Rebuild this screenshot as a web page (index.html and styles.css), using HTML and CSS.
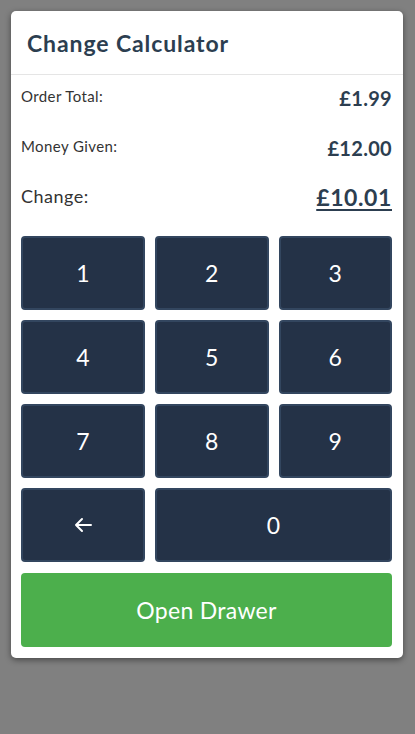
FILE: index.html
```html
<!DOCTYPE html>
<html>
<head>
<meta charset="utf-8">
<link rel="stylesheet" href="styles.css">
</head>
<body>
<div class="card">
  <div class="header"><h1 class="title">Change Calculator</h1></div>
  <div class="body">
    <div class="row">
      <span class="label">Order Total:</span>
      <span class="value">£1.99</span>
    </div>
    <div class="row">
      <span class="label">Money Given:</span>
      <span class="value">£12.00</span>
    </div>
    <div class="row change">
      <span class="label">Change:</span>
      <span class="value">£10.01</span>
    </div>
    <div class="keypad">
      <button class="key">1</button>
      <button class="key">2</button>
      <button class="key">3</button>
      <button class="key">4</button>
      <button class="key">5</button>
      <button class="key">6</button>
      <button class="key">7</button>
      <button class="key">8</button>
      <button class="key">9</button>
      <button class="key"><svg width="20" height="16" viewBox="0 0 20 16"><path d="M18 8H3M9 2L3 8l6 6" fill="none" stroke="#fff" stroke-width="2" stroke-linecap="round" stroke-linejoin="round"/></svg></button>
      <button class="key wide">0</button>
    </div>
    <button class="drawer">Open Drawer</button>
  </div>
</div>
</body>
</html>
```
FILE: styles.css
```css
html, body {
  margin: 0;
  padding: 0;
  background: #808080;
  height: 100%;
}
body {
  font-family: Lato, "Noto Sans", sans-serif;
  padding: 11px 12px 0 11px;
  box-sizing: border-box;
}
.card {
  width: 392px;
  background: #fff;
  border-radius: 5px;
  box-shadow: 0 2px 6px rgba(0,0,0,0.45);
}
.header {
  height: 63px;
  border-bottom: 1px solid #e5e5e5;
  display: flex;
  align-items: center;
  padding-left: 16px;
}
.title {
  margin: 0;
  font-size: 23px;
  font-weight: 700;
  color: #2c3e50;
  letter-spacing: 0.9px;
}
.body {
  padding: 0 11px 11px 10px;
}
.row {
  display: flex;
  justify-content: space-between;
  align-items: flex-start;
  color: #2c3e50;
  box-sizing: border-box;
  height: 50px;
  padding-top: 11px;
}
.row.change {
  height: 60px;
  padding-top: 8px;
}
.label {
  font-size: 15px;
  color: #333;
  letter-spacing: 0.4px;
  padding-top: 1px;
}
.value {
  font-size: 20px;
  font-weight: 700;
  color: #2c3e50;
  letter-spacing: 0.3px;
}
.change .label {
  font-size: 18px;
  padding-top: 2px;
  letter-spacing: 0.5px;
}
.change .value {
  font-size: 23px;
  letter-spacing: 0.6px;
  text-decoration: underline;
  text-underline-offset: 3px;
  text-decoration-thickness: 2px;
}
.keypad {
  display: grid;
  grid-template-columns: 124px 1fr 1fr;
  grid-auto-rows: 74px;
  column-gap: 10px;
  row-gap: 10px;
  margin-top: 1px;
}
.key {
  background: #243247;
  border: 2px solid #33465f;
  border-radius: 4px;
  color: #fff;
  font-family: Lato, "Noto Sans", sans-serif;
  font-size: 23px;
  display: flex;
  align-items: center;
  justify-content: center;
  padding: 0;
}
.wide {
  grid-column: span 2;
}
.drawer {
  display: block;
  width: 100%;
  height: 74px;
  margin-top: 11px;
  background: #4caf4c;
  border: none;
  border-radius: 4px;
  color: #fff;
  font-family: Lato, "Noto Sans", sans-serif;
  font-size: 23px;
  letter-spacing: 0.3px;
}
```
